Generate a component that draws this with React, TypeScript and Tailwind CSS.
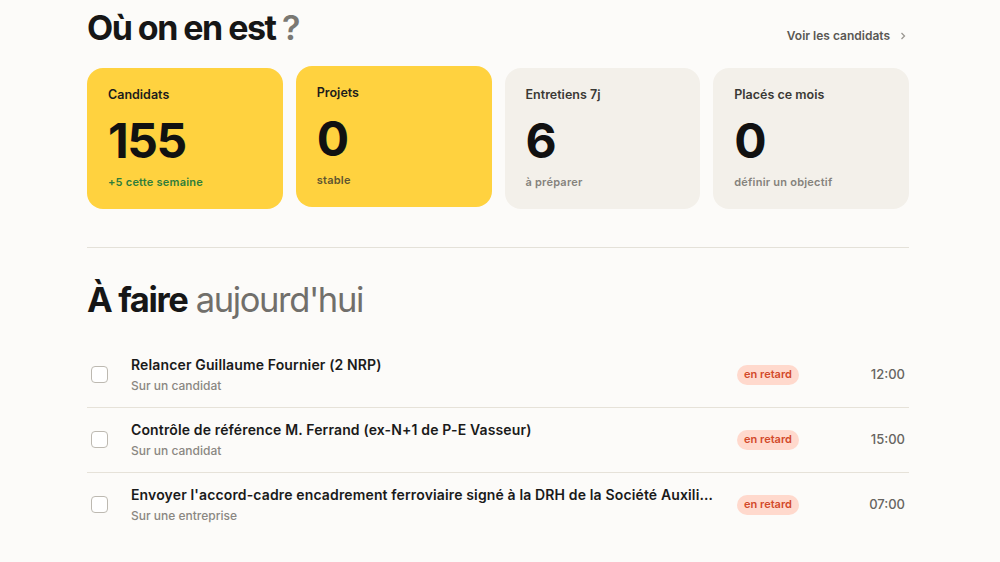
import React from "react";

const stats = [
  { label: "Candidats", value: "155", sub: "+5 cette semaine", yellow: true, subColor: "text-[#2f7d3b]", lift: false },
  { label: "Projets", value: "0", sub: "stable", yellow: true, subColor: "text-[#5e5530]", lift: true },
  { label: "Entretiens 7j", value: "6", sub: "à préparer", yellow: false, subColor: "text-[#85827c]", lift: false },
  { label: "Placés ce mois", value: "0", sub: "définir un objectif", yellow: false, subColor: "text-[#85827c]", lift: false },
];

const tasks = [
  { title: "Relancer Guillaume Fournier (2 NRP)", sub: "Sur un candidat", time: "12:00" },
  { title: "Contrôle de référence M. Ferrand (ex-N+1 de P-E Vasseur)", sub: "Sur un candidat", time: "15:00" },
  {
    title: "Envoyer l'accord-cadre encadrement ferroviaire signé à la DRH de la Société Auxiliaire de Transport",
    sub: "Sur une entreprise",
    time: "07:00",
  },
];

export default function App() {
  return (
    <div
      className="min-h-[562px] w-full bg-[#fcfbf9] text-[#161616]"
      style={{ fontFamily: "Inter, 'Noto Sans', sans-serif" }}
    >
      <div className="ml-[87px] w-[822px] pt-[6px]">
        <div className="flex items-center justify-between">
          <h1 className="text-[34px] font-bold leading-[44px] tracking-[-0.045em]">
            Où on en est <span className="font-semibold text-[#7a7873]">?</span>
          </h1>
          <a className="mr-[2px] mt-[16px] flex items-center gap-[9px] text-[12px] font-semibold text-[#5a5854]">
            Voir les candidats
            <svg width="8" height="8" viewBox="0 0 8 8" fill="none" stroke="#9a9792" strokeWidth="1.3">
              <path d="M2.5 1 L5.5 4 L2.5 7" />
            </svg>
          </a>
        </div>

        <div className="mt-[18px] grid grid-cols-4 gap-[13px]">
          {stats.map((s) => (
            <div
              key={s.label}
              className={`rounded-[16px] px-[21px] pt-[18px] pb-[19px] ${
                s.yellow ? "bg-[#ffd23f]" : "bg-[#f3f0ea]"
              } ${s.lift ? "-translate-y-[2px]" : ""}`}
            >
              <div
                className={`text-[12.5px] font-semibold leading-[18px] ${
                  s.yellow ? "text-[#1c1c1c]" : "text-[#3a3935]"
                }`}
              >
                {s.label}
              </div>
              <div className="mt-[13px] text-[48px] font-bold leading-[48px] tracking-[-0.03em] text-[#111]">
                {s.value}
              </div>
              <div className={`mt-[9px] text-[11px] font-semibold leading-[16px] tracking-[0.02em] ${s.subColor}`}>
                {s.sub}
              </div>
            </div>
          ))}
        </div>

        <div className="mt-[38px] border-t border-[#e4e1d9]" />

        <h2 className="mt-[32px] text-[34.5px] leading-[40px] tracking-[-0.04em]">
          <span className="font-bold">À faire</span>{" "}
          <span className="font-normal text-[#716f6b]">aujourd'hui</span>
        </h2>

        <div className="mt-[23px]">
          {tasks.map((t, i) => (
            <div
              key={i}
              className={`flex items-center px-[4px] pt-[12px] pb-[13px] ${
                i < tasks.length - 1 ? "border-b border-[#e6e2d9]" : ""
              }`}
            >
              <div className="h-[17px] w-[17px] shrink-0 rounded-[4px] border border-[#bdb9b1] bg-white" />
              <div className="ml-[23px] min-w-0 flex-1">
                <div className="truncate text-[14px] font-semibold leading-[20px] tracking-[0.01em] text-[#1a1a1a]">
                  {t.title}
                </div>
                <div className="mt-[3px] text-[12px] font-medium leading-[16px] text-[#8a8782]">{t.sub}</div>
              </div>
              <div className="ml-[21px] flex h-[20px] w-[62px] shrink-0 items-center justify-center rounded-full bg-[#ffd9cd] text-[11px] font-semibold text-[#d2492a]">
                en retard
              </div>
              <div className="ml-[46px] w-[60px] shrink-0 text-right text-[13px] font-medium text-[#66645f]">
                {t.time}
              </div>
            </div>
          ))}
        </div>
      </div>
    </div>
  );
}
